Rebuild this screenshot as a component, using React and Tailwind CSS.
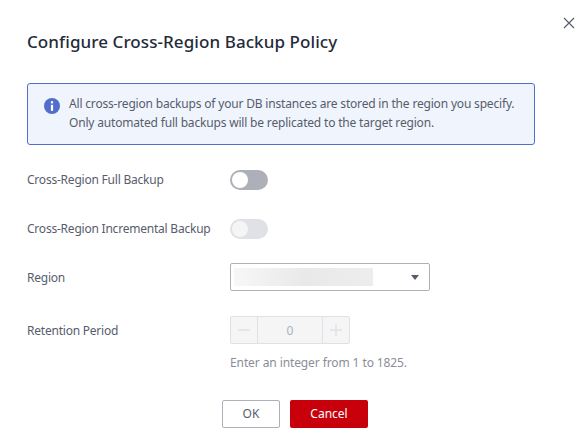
import React from 'react';

const Row = ({ label, className, labelClass = '', children }) => (
  <div className={`flex items-center ${className}`}>
    <div className={`w-[203px] text-[12px] tracking-[-0.22px] text-[#575d6c] ${labelClass}`}>{label}</div>
    {children}
  </div>
);

const Toggle = ({ disabled }) => (
  <div className={`flex items-center w-[38px] h-[20px] rounded-full pl-[2px] ${disabled ? 'bg-[#dfe1e6]' : 'bg-[#adb0b8]'}`}>
    <div className={`w-[16px] h-[16px] rounded-full ${disabled ? 'bg-[#f5f5f6]' : 'bg-white'}`} />
  </div>
);

export default function App() {
  return (
    <div className="w-[586px] h-[441px] bg-white font-['Noto_Sans','Open_Sans',sans-serif] overflow-hidden relative">
      <svg className="absolute right-[11px] top-[17px]" width="12" height="12" viewBox="0 0 12 12" fill="none" stroke="#575d6c" strokeWidth="1.2">
        <path d="M1 1l10 10M11 1L1 11" />
      </svg>
      <div className="pl-[27px] pr-[22px] pt-[30px]">
        <h1 className="text-[17px] tracking-[0.08px] leading-[24px] font-medium text-[#252b3a]">Configure Cross-Region Backup Policy</h1>
        <div className="mt-[29px] w-[508px] h-[62px] flex items-start bg-[#f0f4fd] border border-[#526ecc] rounded-[3px] pl-[16px] pt-[10px]">
          <svg className="mt-[4px] shrink-0" width="16" height="16" viewBox="0 0 16 16">
            <circle cx="8" cy="8" r="8" fill="#526ecc" />
            <rect x="6.9" y="6.8" width="2.2" height="6" fill="white" />
            <rect x="6.9" y="3.2" width="2.2" height="2.2" fill="white" />
          </svg>
          <p className="ml-[9px] text-[12px] tracking-[-0.18px] leading-[19px] text-[#575d6c]">
            All cross-region backups of your DB instances are stored in the region you specify.<br />
            Only automated full backups will be replicated to the target region.
          </p>
        </div>
        <Row label="Cross-Region Full Backup" className="mt-[25px] h-[20px]"><Toggle /></Row>
        <Row label="Cross-Region Incremental Backup" className="mt-[29px] h-[20px]"><Toggle disabled /></Row>
        <Row label="Region" labelClass="pt-[1px]" className="mt-[24px] h-[28px]">
          <div className="w-[200px] h-[28px] border border-[#adb0b8] rounded-[2px] flex items-center pl-[3px] pr-[10px] justify-between">
            <div className="w-[139px] h-[18px] bg-gradient-to-r from-[#f7f7f8] via-[#e9e9ea] to-[#ededee]" />
            <svg width="8" height="5" viewBox="0 0 8 5"><path d="M0 0h8L4 5z" fill="#575d6c" /></svg>
          </div>
        </Row>
        <Row label="Retention Period" labelClass="pt-[1px]" className="mt-[25px] h-[28px]">
          <div className="w-[120px] h-[28px] border border-[#dfe1e6] rounded-[2px] bg-[#f5f5f6] flex items-center text-[12px] text-[#adb0b8]">
            <div className="w-[27px] h-full flex items-center justify-center border-r border-[#dfe1e6]">
              <svg width="12" height="12" viewBox="0 0 12 12" stroke="#dfe1e6" strokeWidth="1.5"><path d="M0 6h12" /></svg>
            </div>
            <div className="flex-1 h-full pt-[1px] flex items-center justify-center">0</div>
            <div className="w-[27px] h-full flex items-center justify-center border-l border-[#dfe1e6]">
              <svg width="12" height="12" viewBox="0 0 12 12" stroke="#dfe1e6" strokeWidth="1.5"><path d="M0 6h12M6 0v12" /></svg>
            </div>
          </div>
        </Row>
        <div className="ml-[203px] mt-[10px] text-[12px] tracking-[-0.1px] leading-[18px] text-[#8a8e99]">Enter an integer from 1 to 1825.</div>
        <div className="mt-[28px] flex gap-[10px] ml-[195px]">
          <button className="w-[58px] h-[28px] border border-[#adb0b8] rounded-[2px] bg-white text-[12px] text-[#575d6c]">OK</button>
          <button className="w-[78px] h-[28px] rounded-[2px] bg-[#c7000b] text-[12px] text-white">Cancel</button>
        </div>
      </div>
    </div>
  );
}
